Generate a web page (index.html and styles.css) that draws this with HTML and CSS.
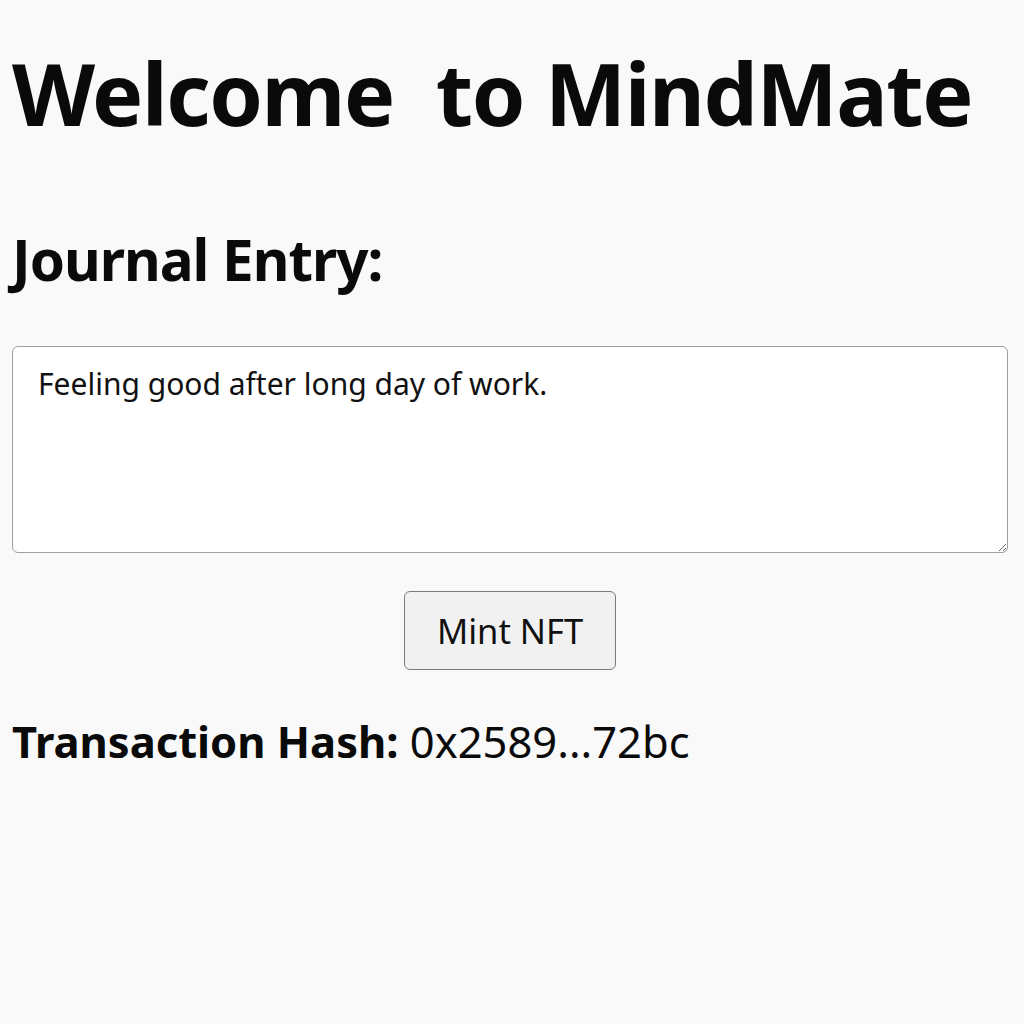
FILE: index.html
```html
<!DOCTYPE html>
<html>
<head>
<meta charset="utf-8">
<link rel="stylesheet" href="styles.css">
</head>
<body>
<main class="page">
  <h1 class="title">Welcome&nbsp; to MindMate</h1>
  <h2 class="label">Journal Entry:</h2>
  <textarea class="entry">Feeling good after long day of work.</textarea>
  <div class="actions"><button class="mint">Mint NFT</button></div>
  <p class="hash"><span class="hash-label">Transaction Hash:</span> 0x2589...72bc</p>
</main>
</body>
</html>
```
FILE: styles.css
```css
html, body {
  margin: 0;
  padding: 0;
  background: #f9f9f9;
}
.page {
  font-family: "Noto Sans", "Open Sans", sans-serif;
  color: #0a0a0a;
  padding: 0 16px 0 12px;
  display: flex;
  flex-direction: column;
}
.title {
  margin: 38px 0 0;
  font-size: 86px;
  font-weight: 700;
  line-height: 110px;
  letter-spacing: -1.4px;
}
.label {
  margin: 78px 0 0;
  font-size: 56.5px;
  font-weight: 700;
  line-height: 68px;
  letter-spacing: -1px;
}
.entry {
  margin: 52px 0 0;
  height: 207px;
  box-sizing: border-box;
  width: 100%;
  border: 1px solid #9aa0a6;
  border-radius: 6px;
  background: #fff;
  padding: 16px 25px;
  font-family: "Noto Sans", "Open Sans", sans-serif;
  font-size: 30px;
  color: #111;
  resize: vertical;
}
.actions {
  display: flex;
  justify-content: center;
  margin-top: 38px;
}
.mint {
  width: 212px;
  height: 79px;
  font-family: "Noto Sans", "Open Sans", sans-serif;
  font-size: 34.5px;
  color: #111;
  background: #f1f1f1;
  border: 1px solid #7a7a7a;
  border-radius: 6px;
}
.hash {
  margin: 41px 0 0;
  font-size: 43.5px;
  line-height: 60px;
}
.hash-label {
  font-weight: 700;
}
```
